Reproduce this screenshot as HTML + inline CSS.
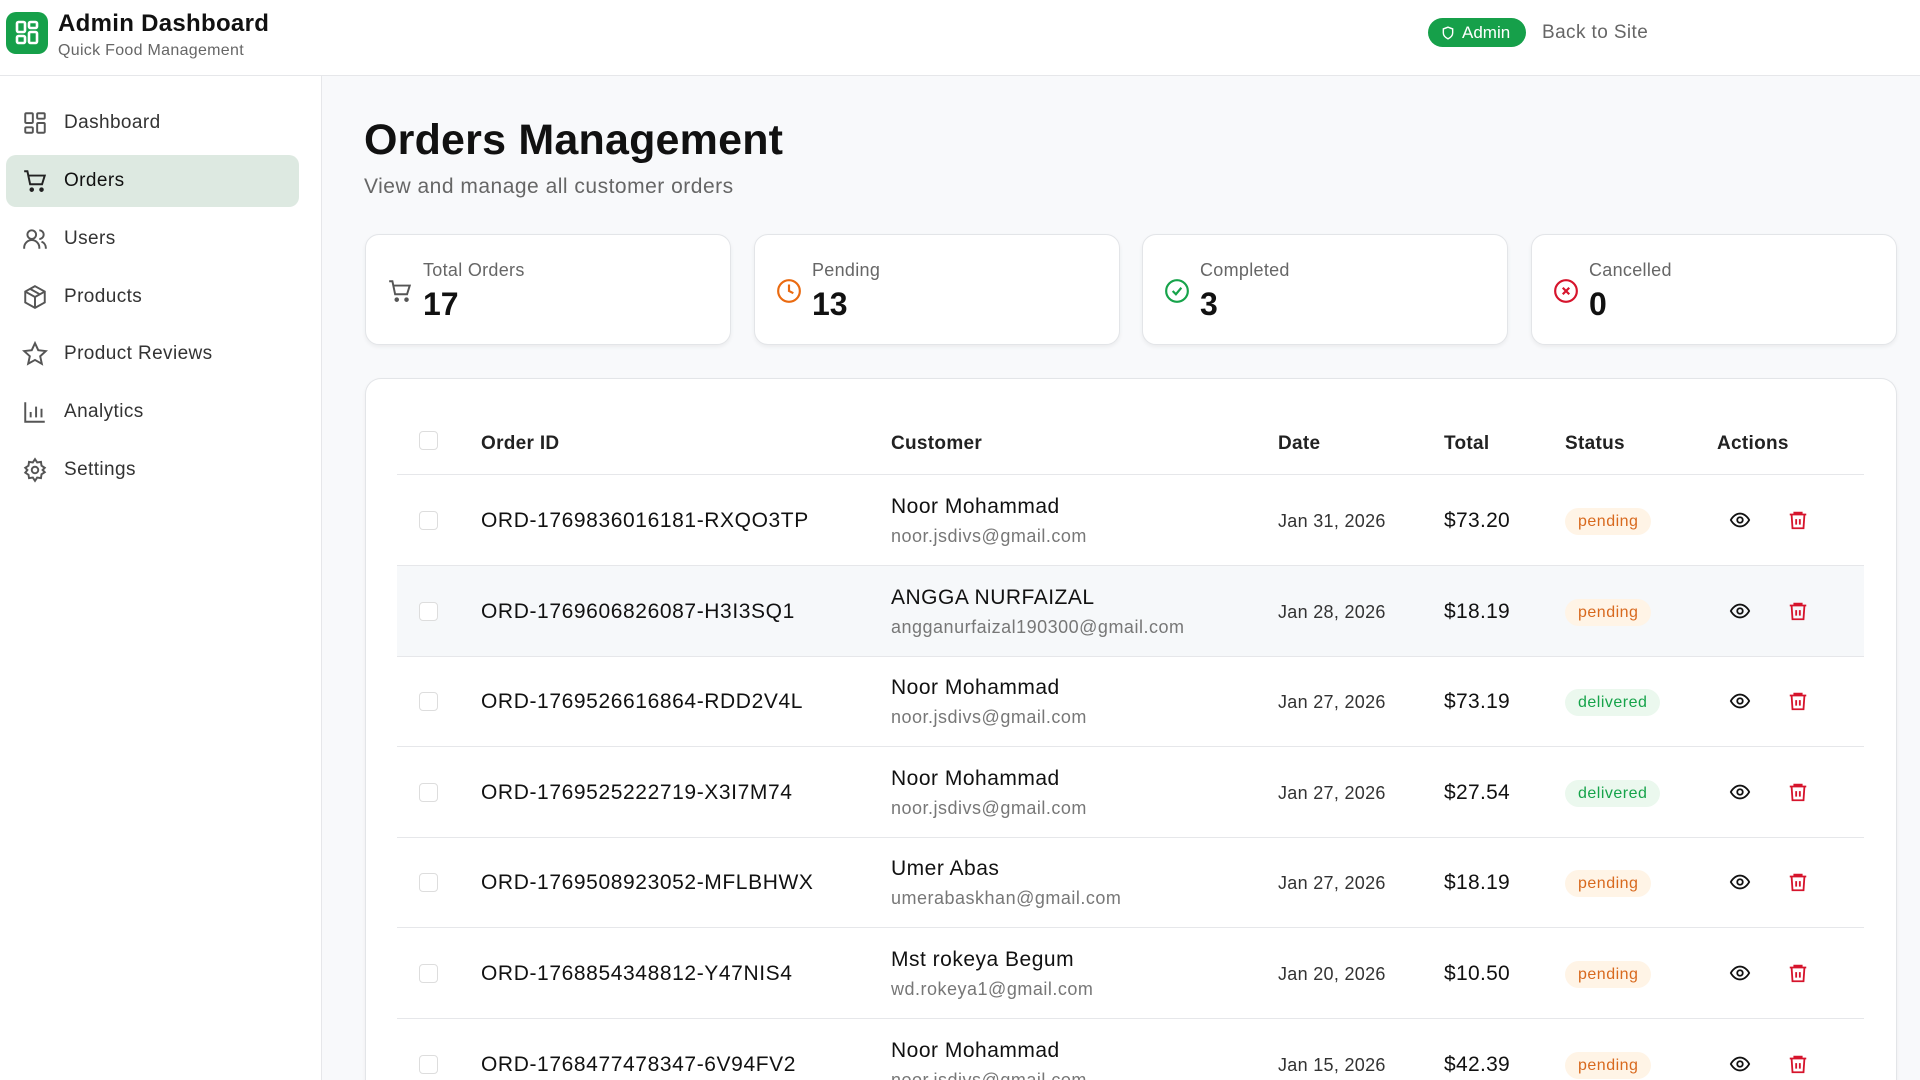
<!DOCTYPE html>
<html><head><meta charset="utf-8"><style>
*{box-sizing:border-box;margin:0;padding:0}
html,body{width:1920px;height:1080px;overflow:hidden}
body{font-family:"Liberation Sans",sans-serif;background:#f8f9fb;color:#111;position:relative}
#wrap{position:absolute;left:0;top:0;width:1920px;height:1080px;overflow:hidden}
.hdr{position:absolute;left:0;top:0;width:1920px;height:76px;background:#fff;border-bottom:1px solid #e6e7ea}
.logo{position:absolute;left:6px;top:12px;width:42px;height:42px;border-radius:10px;background:#16a04a}
.side{position:absolute;left:0;top:76px;width:322px;height:1004px;background:#fff;border-right:1px solid #e6e7ea}
.nav{position:absolute;left:6px;width:293px;height:52px;border-radius:10px;display:flex;align-items:center;font-size:19px;color:#333;letter-spacing:.4px}
.nav svg{position:absolute;left:16px}
.nav span{position:absolute;left:58px}
.nav.act{background:#dde9e1;color:#111}
.card{position:absolute;top:234px;width:366px;height:111px;background:#fff;border:1px solid #e3e5e8;border-radius:14px;box-shadow:0 2px 4px rgba(0,0,0,.06)}
.card svg{position:absolute;left:21px;top:43px}
.card .l{position:absolute;left:57px;top:25px;font-size:18px;color:#666;letter-spacing:.3px}
.card .v{position:absolute;left:57px;top:51px;font-size:32px;font-weight:bold}
.tbl{position:absolute;left:365px;top:378px;width:1532px;height:702px;background:#fff;border:1px solid #e3e5e8;border-bottom:none;border-radius:16px 16px 0 0;box-shadow:0 2px 4px rgba(0,0,0,.05)}
.row{position:absolute;left:397px;width:1467px;height:91px;border-bottom:1px solid #e6e7ea}
.row.h{background:#f6f8fa}
.cb{position:absolute;left:22px;width:19px;height:19px;border:1px solid #ddd;border-radius:4px;background:#fff}
.c{position:absolute;white-space:nowrap}
.oid{left:84px;font-size:21px;color:#111;letter-spacing:.6px}
.nm{left:494px;font-size:21px;color:#111;letter-spacing:.5px}
.em{left:494px;font-size:18px;color:#777;letter-spacing:.5px}
.dt{left:881px;font-size:18px;color:#333;letter-spacing:.3px}
.tt{left:1047px;font-size:21px;color:#111;letter-spacing:.3px}
.bd{left:1168px;height:27px;padding:0 13px;border-radius:14px;font-size:16px;line-height:27px;letter-spacing:.5px}
.pe{background:#fff4e6;color:#d8691e}
.de{background:#ebf8ee;color:#16a34a}
.th{position:absolute;top:433px;font-size:19px;font-weight:600;color:#222;letter-spacing:.3px}
</style></head><body><div id="wrap">
<div class="hdr">
 <div class="logo"><svg width="42" height="42" viewBox="0 0 42 42" fill="none" stroke="#fff" stroke-width="2.6"><rect x="11" y="10" width="8" height="10" rx="1.5"/><rect x="23" y="10" width="8" height="6" rx="1.5"/><rect x="23" y="20" width="8" height="11" rx="1.5"/><rect x="11" y="24" width="8" height="7" rx="1.5"/></svg></div>
 <div style="position:absolute;left:58px;top:10px;font-size:24px;font-weight:bold;letter-spacing:.3px">Admin Dashboard</div>
 <div style="position:absolute;left:58px;top:42px;font-size:16px;color:#666;letter-spacing:.3px">Quick Food Management</div>
 <div style="position:absolute;left:1428px;top:18px;width:98px;height:29px;border-radius:15px;background:#16a04a;color:#fff;font-size:17px;line-height:29px;padding-left:34px">Admin<svg style="position:absolute;left:13px;top:7px" width="14" height="16" viewBox="0 0 24 24" fill="none" stroke="#fff" stroke-width="2.4"><path d="M12 2l8 3v7c0 5-4 8-8 10-4-2-8-5-8-10V5z"/></svg></div>
 <div style="position:absolute;left:1542px;top:22px;font-size:19px;color:#666;letter-spacing:.4px">Back to Site</div>
</div>
<div class="side">
 <div class="nav" style="top:21px"><svg width="26" height="26" viewBox="0 0 24 24" fill="none" stroke="#555" stroke-width="1.8"><rect x="3" y="3" width="7" height="9" rx="1"/><rect x="14" y="3" width="7" height="5" rx="1"/><rect x="14" y="12" width="7" height="9" rx="1"/><rect x="3" y="16" width="7" height="5" rx="1"/></svg><span>Dashboard</span></div>
 <div class="nav act" style="top:79px"><svg width="26" height="26" viewBox="0 0 24 24" fill="none" stroke="#222" stroke-width="1.8"><path d="M2 3h3l2.5 12h11L21 7H6"/><circle cx="9" cy="20" r="1.2" fill="#222"/><circle cx="18" cy="20" r="1.2" fill="#222"/></svg><span>Orders</span></div>
 <div class="nav" style="top:137px"><svg width="26" height="26" viewBox="0 0 24 24" fill="none" stroke="#555" stroke-width="1.8"><circle cx="9" cy="8" r="4"/><path d="M2 21v-1a6 6 0 0 1 14 0v1M16 4a4 4 0 0 1 0 8M22 21v-1a6 6 0 0 0-4-5.5"/></svg><span>Users</span></div>
 <div class="nav" style="top:195px"><svg width="26" height="26" viewBox="0 0 24 24" fill="none" stroke="#555" stroke-width="1.8"><path d="M12 2l9 5v10l-9 5-9-5V7z M3 7l9 5 9-5M12 12v10M7.5 4.5l9 5"/></svg><span>Products</span></div>
 <div class="nav" style="top:252px"><svg width="26" height="26" viewBox="0 0 24 24" fill="none" stroke="#555" stroke-width="1.8"><path d="M12 2l3 6.5 7 .8-5.2 4.8 1.5 7L12 17.5 5.7 21l1.5-7L2 9.3l7-.8z"/></svg><span>Product Reviews</span></div>
 <div class="nav" style="top:310px"><svg width="26" height="26" viewBox="0 0 24 24" fill="none" stroke="#555" stroke-width="1.8"><path d="M3 3v18h18M8 17v-5M13 17V7M18 17v-8"/></svg><span>Analytics</span></div>
 <div class="nav" style="top:368px"><svg width="26" height="26" viewBox="0 0 24 24" fill="none" stroke="#555" stroke-width="1.8"><circle cx="12" cy="12" r="3"/><path d="M12 2l2 3 3.5-.5.5 3.5 3 2-2 2 2 2-3 2-.5 3.5-3.5-.5-2 3-2-3-3.5.5L6 16.5 3 14.5l2-2.5-2-2 3-2L6.5 4.5 10 5z"/></svg><span>Settings</span></div>
</div>
<div style="position:absolute;left:364px;top:116px;font-size:43px;font-weight:bold;letter-spacing:.2px">Orders Management</div>
<div style="position:absolute;left:364px;top:175px;font-size:21px;color:#666;letter-spacing:.5px">View and manage all customer orders</div>
<div class="card" style="left:365px"><svg width="26" height="26" viewBox="0 0 24 24" fill="none" stroke="#555" stroke-width="1.8"><path d="M2 3h3l2.5 12h11L21 7H6"/><circle cx="9" cy="20" r="1.2" fill="#555"/><circle cx="18" cy="20" r="1.2" fill="#555"/></svg><div class="l">Total Orders</div><div class="v">17</div></div>
<div class="card" style="left:754px"><svg width="26" height="26" viewBox="0 0 24 24" fill="none" stroke="#ea6a10" stroke-width="2"><circle cx="12" cy="12" r="10"/><path d="M12 6v6l4 2"/></svg><div class="l">Pending</div><div class="v">13</div></div>
<div class="card" style="left:1142px"><svg width="26" height="26" viewBox="0 0 24 24" fill="none" stroke="#16a34a" stroke-width="2"><circle cx="12" cy="12" r="10"/><path d="M8 12l3 3 5-6"/></svg><div class="l">Completed</div><div class="v">3</div></div>
<div class="card" style="left:1531px"><svg width="26" height="26" viewBox="0 0 24 24" fill="none" stroke="#d6142c" stroke-width="2"><circle cx="12" cy="12" r="10"/><path d="M9 9l6 6M15 9l-6 6"/></svg><div class="l">Cancelled</div><div class="v">0</div></div>
<div class="tbl"></div>
<div class="row" style="top:384px;height:91px"><div class="cb" style="top:47px"></div></div>
<div class="th" style="left:481px">Order ID</div><div class="th" style="left:891px">Customer</div><div class="th" style="left:1278px">Date</div><div class="th" style="left:1444px">Total</div><div class="th" style="left:1565px">Status</div><div class="th" style="left:1717px">Actions</div>
<svg width="0" height="0" style="position:absolute"><defs>
<g id="eye"><path d="M2 12s3.5-7 10-7 10 7 10 7-3.5 7-10 7S2 12 2 12z" fill="none" stroke="#111" stroke-width="2"/><circle cx="12" cy="12" r="3" fill="none" stroke="#111" stroke-width="2"/></g>
<g id="tr" fill="none" stroke="#d6142c" stroke-width="2"><path d="M3 6h18M8 6V4h8v2M5 6l1 15h12l1-15M10 11v6M14 11v6"/></g>
</defs></svg>
<div id="rows" style="position:absolute;left:0;top:0;width:1920px;height:1080px;overflow:hidden"></div>
</div>
<script>
var d=[["ORD-1769836016181-RXQO3TP","Noor Mohammad","noor.jsdivs@gmail.com","Jan 31, 2026","$73.20","pending"],
["ORD-1769606826087-H3I3SQ1","ANGGA NURFAIZAL","angganurfaizal190300@gmail.com","Jan 28, 2026","$18.19","pending"],
["ORD-1769526616864-RDD2V4L","Noor Mohammad","noor.jsdivs@gmail.com","Jan 27, 2026","$73.19","delivered"],
["ORD-1769525222719-X3I7M74","Noor Mohammad","noor.jsdivs@gmail.com","Jan 27, 2026","$27.54","delivered"],
["ORD-1769508923052-MFLBHWX","Umer Abas","umerabaskhan@gmail.com","Jan 27, 2026","$18.19","pending"],
["ORD-1768854348812-Y47NIS4","Mst rokeya Begum","wd.rokeya1@gmail.com","Jan 20, 2026","$10.50","pending"],
["ORD-1768477478347-6V94FV2","Noor Mohammad","noor.jsdivs@gmail.com","Jan 15, 2026","$42.39","pending"]];
var h="";d.forEach(function(r,i){var t=475+i*90.6;
h+='<div class="row'+(i==1?' h':'')+'" style="top:'+t+'px"><div class="cb" style="top:36px"></div>'+
'<div class="c oid" style="top:34px">'+r[0]+'</div><div class="c nm" style="top:20px">'+r[1]+'</div><div class="c em" style="top:51px">'+r[2]+'</div>'+
'<div class="c dt" style="top:36px">'+r[3]+'</div><div class="c tt" style="top:34px">'+r[4]+'</div>'+
'<div class="c bd '+(r[5]=="pending"?"pe":"de")+'" style="top:33px">'+r[5]+'</div>'+
'<svg class="c" style="left:1332px;top:34px" width="22" height="22" viewBox="0 0 24 24"><use href="#eye"/></svg>'+
'<svg class="c" style="left:1390px;top:34px" width="22" height="22" viewBox="0 0 24 24"><use href="#tr"/></svg></div>';});
document.getElementById("rows").innerHTML=h;
</script>
</body></html>
